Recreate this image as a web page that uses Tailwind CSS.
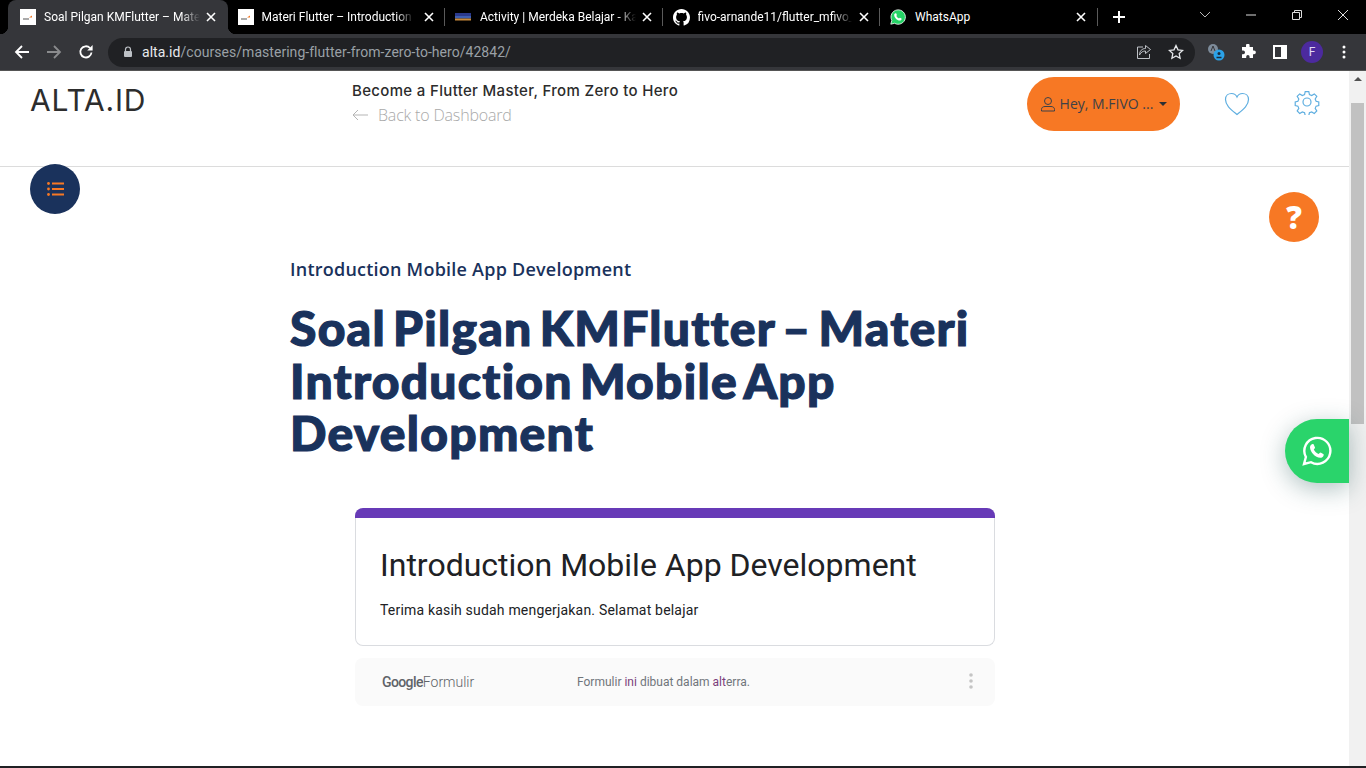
<!DOCTYPE html>
<html lang="en">
<head>
  <meta charset="UTF-8">
  <title>Soal Pilgan KMFlutter</title>
  <script src="https://cdn.jsdelivr.net/npm/@tailwindcss/browser@4"></script>
</head>
<body class="h-[768px] w-[1366px] overflow-hidden bg-white font-['Roboto',sans-serif]">
  <div class="flex h-[768px] flex-col">
    <!-- Tab strip -->
    <div class="flex h-[34px] shrink-0 items-end bg-black pl-[8px] text-white">
      <div class="relative flex h-[34px] w-[219.5px] items-center rounded-t-lg bg-[#35363a] pl-[12px] pr-[11px]">
        <span class="absolute -left-2 bottom-0 h-2 w-2 bg-[radial-gradient(circle_at_0_0,transparent_8px,#35363a_8.5px)]"></span>
        <span class="absolute -right-2 bottom-0 h-2 w-2 bg-[radial-gradient(circle_at_100%_0,transparent_8px,#35363a_8.5px)]"></span>
        <svg class="h-4 w-4 shrink-0" viewBox="0 0 16 16"><rect width="16" height="16" fill="#fff"/><path d="M3 9.500h6v1H3z" fill="#555"/><path d="M9 8.500l3-2v2z" fill="#f47721"/></svg>
        <span class="ml-2 w-[156px] overflow-hidden text-xs leading-4 whitespace-nowrap [mask-image:linear-gradient(to_right,black_88%,transparent)]">Soal Pilgan KMFlutter – Materi</span>
        <svg class="ml-auto h-3 w-3" viewBox="0 0 12 12"><path d="M2 2l8 8M10 2l-8 8" stroke="#fff" stroke-width="1.600"/></svg>
      </div>
      <div class="flex h-[34px] w-[217.5px] items-center pl-[10px]">
        <svg class="h-4 w-4 shrink-0" viewBox="0 0 16 16"><rect width="16" height="16" fill="#fff"/><path d="M3 9.500h6v1H3z" fill="#555"/><path d="M9 8.500l3-2v2z" fill="#f47721"/></svg>
        <span class="ml-2 w-[152px] overflow-hidden text-xs leading-4 whitespace-nowrap [mask-image:linear-gradient(to_right,black_88%,transparent)]">Materi Flutter – Introduction Mobile</span>
        <svg class="ml-auto h-3 w-3" viewBox="0 0 12 12"><path d="M2 2l8 8M10 2l-8 8" stroke="#fff" stroke-width="1.600"/></svg>
        <span class="ml-[9px] h-[18px] w-px bg-[#5a5a5a]"></span>
      </div>
      <div class="flex h-[34px] w-[217.5px] items-center pl-[10px]">
        <svg class="h-4 w-4 shrink-0" viewBox="0 0 16 16"><rect y="4" width="16" height="3" fill="#2b3a8c"/><rect y="7" width="16" height="2.500" fill="#3f5fb0"/><rect y="9.500" width="16" height="2" fill="#c98a3a"/></svg>
        <span class="ml-[9px] w-[156px] overflow-hidden text-xs leading-4 whitespace-nowrap [mask-image:linear-gradient(to_right,black_88%,transparent)]">Activity | Merdeka Belajar - Kampus</span>
        <svg class="ml-auto h-3 w-3" viewBox="0 0 12 12"><path d="M2 2l8 8M10 2l-8 8" stroke="#fff" stroke-width="1.600"/></svg>
        <span class="ml-[9px] h-[18px] w-px bg-[#5a5a5a]"></span>
      </div>
      <div class="flex h-[34px] w-[217.5px] items-center pl-[10px]">
        <svg class="h-[17px] w-[17px] shrink-0" viewBox="0 0 16 16"><path fill="#fff" d="M8 0C3.580 0 0 3.580 0 8c0 3.540 2.290 6.530 5.470 7.590.4.070.55-.17.55-.38 0-.19-.01-.82-.01-1.490-2.010.37-2.530-.49-2.690-.94-.09-.23-.48-.94-.82-1.130-.28-.15-.68-.52-.01-.53.63-.01 1.080.58 1.230.82.72 1.210 1.870.87 2.330.66.07-.52.28-.87.51-1.070-1.780-.2-3.640-.89-3.640-3.950 0-.87.31-1.590.82-2.150-.08-.2-.36-1.020.08-2.120 0 0 .67-.21 2.200.82.64-.18 1.320-.27 2-.27s1.360.09 2 .27c1.530-1.040 2.200-.82 2.200-.82.44 1.100.16 1.920.08 2.120.51.56.82 1.270.82 2.150 0 3.070-1.870 3.750-3.650 3.950.29.25.54.73.54 1.480 0 1.070-.01 1.930-.01 2.200 0 .21.15.46.55.38A8.010 8.010 0 0 0 16 8c0-4.420-3.580-8-8-8z"/></svg>
        <span class="ml-2 w-[154px] overflow-hidden text-xs leading-4 whitespace-nowrap [mask-image:linear-gradient(to_right,black_88%,transparent)]">fivo-arnande11/flutter_mfivo_arnande</span>
        <svg class="ml-auto h-3 w-3" viewBox="0 0 12 12"><path d="M2 2l8 8M10 2l-8 8" stroke="#fff" stroke-width="1.600"/></svg>
        <span class="ml-[9px] h-[18px] w-px bg-[#5a5a5a]"></span>
      </div>
      <div class="flex h-[34px] w-[217.5px] items-center pl-[10px]">
        <svg class="h-4 w-4 shrink-0" viewBox="0 0 16 16"><path fill="#25d366" stroke="#fff" stroke-width=".8" d="M.8 15.200l1-3.800A7.200 7.200 0 1 1 4.600 14.300z"/><path fill="#fff" d="M5.600 4.200c.3 0 .6 0 .7.4l.6 1.300c0 .3-.4.7-.6 1 .6 1.100 1.500 2 2.700 2.600.3-.2.7-.8 1-.8l1.400.7c.3.2.3.4.2.8-.2.8-1 1.300-1.800 1.300-2.800-.3-5.600-3-5.600-5.600 0-.8.6-1.600 1.400-1.700z"/></svg>
        <span class="ml-[9px] text-xs leading-4 whitespace-nowrap">WhatsApp</span>
        <svg class="ml-auto h-3 w-3" viewBox="0 0 12 12"><path d="M2 2l8 8M10 2l-8 8" stroke="#fff" stroke-width="1.600"/></svg>
        <span class="ml-[10px] h-[18px] w-px bg-[#5a5a5a]"></span>
      </div>
      <div class="flex h-[34px] flex-1 items-center pl-[14px]">
        <svg class="h-3.5 w-3.5" viewBox="0 0 14 14"><path d="M7 1v12M1 7h12" stroke="#fff" stroke-width="2"/></svg>
        <svg class="ml-[73px] h-3 w-3 -translate-y-0.5" viewBox="0 0 12 12"><path d="M1 3l5 5 5-5" fill="none" stroke="#b8b8b8"/></svg>
        <svg class="ml-[34px] h-3 w-3 -translate-y-0.5" viewBox="0 0 12 12"><path d="M1 6h10" stroke="#ddd"/></svg>
        <svg class="ml-[34px] h-3 w-3 -translate-y-0.5" viewBox="0 0 12 12"><path d="M1.500 3.500h7v7h-7zM3.500 3.500v-2h7v7h-2" fill="none" stroke="#ddd"/></svg>
        <svg class="ml-[34px] h-3 w-3 -translate-y-0.5" viewBox="0 0 12 12"><path d="M1 1l10 10M11 1L1 11" stroke="#ddd"/></svg>
      </div>
    </div>

    <!-- Toolbar -->
    <div class="flex h-[37px] shrink-0 items-center border-b border-[#555] bg-[#35363a] pl-[14px]">
      <svg class="h-4 w-4" viewBox="0 0 16 16"><path d="M15 8H2M8 2L2 8l6 6" fill="none" stroke="#fff" stroke-width="1.800"/></svg>
      <svg class="ml-4 h-4 w-4" viewBox="0 0 16 16"><path d="M1 8h13M8 2l6 6-6 6" fill="none" stroke="#8a8b8d" stroke-width="1.800"/></svg>
      <svg class="ml-4 h-4 w-4" viewBox="0 0 16 16"><path d="M13.500 8.500A5.600 5.600 0 1 1 12 4" fill="none" stroke="#fff" stroke-width="1.800"/><path d="M14.600 1v5.400H9.200z" fill="#fff"/></svg>
      <div class="ml-[14px] flex h-[29px] w-[1087px] items-center rounded-full bg-[#202124] pl-[14px] pr-[11px]">
        <svg class="h-3 w-3" viewBox="0 0 12 12"><path d="M3.500 5V3.500a2.500 2.500 0 0 1 5 0V5" fill="none" stroke="#bdc1c6" stroke-width="1.200"/><rect x="2" y="5" width="8" height="6" rx="1" fill="#bdc1c6"/></svg>
        <span class="ml-[8px] text-sm leading-4 tracking-[0.04px] text-[#e8eaed]">alta.id<span class="text-[#9aa0a6]">/courses/mastering-flutter-from-zero-to-hero/42842/</span></span>
        <svg class="ml-auto h-4 w-4" viewBox="0 0 16 16"><path d="M7 3H1.500v11.500h12V10" fill="none" stroke="#bdc1c6"/><path d="M9.500 1.500l5 4-5 4V7C7 7 5 8 3.500 11c0-4 2.500-6.500 6-6.500z" fill="none" stroke="#bdc1c6"/></svg>
        <svg class="ml-4 h-4 w-4" viewBox="0 0 16 16"><path d="M8 1.500l2 4.300 4.700.6-3.500 3.200.9 4.700L8 11.900l-4.100 2.400.9-4.700L1.300 6.400 6 5.800z" fill="none" stroke="#e8eaed" stroke-width="1.300"/></svg>
      </div>
      <div class="ml-[12px] flex items-center">
        <svg class="h-[18px] w-[18px]" viewBox="0 0 18 18"><circle cx="6" cy="6" r="5" fill="#7d8b9a"/><path d="M4 8l2-5 2 5" fill="none" stroke="#35363a"/><circle cx="12" cy="12" r="5.500" fill="#2ba2e8"/><circle cx="12" cy="10.500" r="1.500" fill="#1a2a3a"/><path d="M9.500 14.500h5" stroke="#1a2a3a" stroke-width="1.500"/></svg>
        <svg class="ml-[15px] h-4 w-4" viewBox="0 0 16 16"><path fill="#fff" d="M6 1.500a1.800 1.800 0 0 1 3.600 0V3h3.400v3.400h1a1.900 1.900 0 0 1 0 3.800h-1V14H9.600v-1.200a1.700 1.700 0 0 0-3.400 0V14H2v-3.800h1.200a1.800 1.800 0 0 0 0-3.600H2V3h4z"/></svg>
        <svg class="ml-[17px] h-[14px] w-[14px]" viewBox="0 0 14 14"><path fill-rule="evenodd" fill="#fff" d="M0 0h14v14H0zM2 2v10h6V2z"/></svg>
        <div class="ml-[14px] flex h-[22px] w-[22px] items-center justify-center rounded-full bg-[#4c2a9e] text-xs text-[#e0d8f5]">F</div>
        <svg class="ml-[19px] h-4 w-1" viewBox="0 0 4 16"><circle cx="2" cy="3" r="1.500" fill="#fff"/><circle cx="2" cy="8" r="1.500" fill="#fff"/><circle cx="2" cy="13" r="1.500" fill="#fff"/></svg>
      </div>
    </div>

    <!-- Page -->
    <div class="relative flex min-h-0 flex-1 border-b-2 border-[#202124]">
      <div class="relative min-w-0 flex-1">
        <!-- Course header -->
        <header class="flex h-[96px] border-b border-[#dcdcdc]">
          <div class="w-[352px] pl-[30px] pt-[13px] font-['Inter',sans-serif] text-[30px] leading-8 tracking-[0.8px] text-[#2d2d2d]">ALTA.ID</div>
          <div class="w-[675px] pt-[10px]">
            <p class="font-['Inter',sans-serif] text-[15px] leading-5 font-medium tracking-[0.33px] text-[#2c2c2c]">Become a Flutter Master, From Zero to Hero</p>
            <p class="mt-[2px] flex items-center font-['Open_Sans',sans-serif] text-base leading-6 font-light tracking-[-0.18px] text-[#a9a9a9]">
              <svg class="mr-[10px] h-4 w-4" viewBox="0 0 16 16"><path d="M16 8H1M6 3L1 8l5 5" fill="none" stroke="#b5b5b5"/></svg>
              Back to Dashboard
            </p>
          </div>
          <div class="mt-[6px] flex h-[54px] w-[153px] items-center justify-center rounded-[27px] bg-[#f77824] font-['Open_Sans',sans-serif] text-sm text-[#3d4147]">
            <svg class="mr-1 h-4 w-4" viewBox="0 0 16 16"><circle cx="8" cy="5" r="3.500" fill="none" stroke="#3d4147"/><path d="M1.500 15v-1.500c0-2 1.500-3 3.500-3h6c2 0 3.500 1 3.500 3V15z" fill="none" stroke="#3d4147"/></svg>
            Hey, M.FIVO ...
            <span class="ml-[6px] h-0 w-0 border-x-4 border-t-4 border-x-transparent border-t-[#2c2f33]"></span>
          </div>
          <svg class="ml-[44px] mt-[20px] h-[26px] w-[26px]" viewBox="0 0 26 26"><path d="M13 23.500C7 18.500 1.500 14.500 1.500 8.500 1.500 4.500 4.500 2.500 7.500 2.500c2.500 0 4.500 1.300 5.500 3.500 1-2.200 3-3.500 5.500-3.500 3 0 6 2 6 6 0 6-5.500 10-11.500 15z" fill="none" stroke="#5eaee0" stroke-width="1.200"/></svg>
          <svg class="ml-[44px] mt-[18px] h-[26px] w-[26px]" viewBox="0 0 26 26"><circle cx="13" cy="13" r="4" fill="none" stroke="#5eaee0" stroke-width="1.200"/><path d="M11 1.500h4l.7 3.300 2.500 1 2.900-1.800 2.800 2.800-1.800 2.900 1 2.500 3 .7v4l-3 .7-1 2.500 1.800 2.900-2.800 2.800-2.900-1.800-2.500 1-.7 3h-4l-.7-3-2.500-1-2.900 1.800-2.800-2.800 1.800-2.900-1-2.500-3-.7v-4l3-.7 1-2.500-1.800-2.900 2.800-2.800 2.900 1.800 2.500-1z" transform="translate(1.300 1.300) scale(.9)" fill="none" stroke="#5eaee0" stroke-width="1.300"/></svg>
        </header>

        <!-- Article -->
        <main class="pl-[290px] pt-[90px]">
          <p class="font-['Open_Sans',sans-serif] text-lg leading-6 font-semibold tracking-[0.23px] text-[#1a325c]">Introduction Mobile App Development</p>
          <h1 class="mt-[21px] w-[700px] font-['Lato',sans-serif] text-[48px] leading-[52.500px] font-black tracking-[1.25px] [word-spacing:-5.5px] text-[#1a325c] [-webkit-text-stroke:1.200px_#1a325c] [font-variant-ligatures:none]">Soal Pilgan KMFlutter – Materi Introduction Mobile App Development</h1>

          <section class="ml-[65px] mt-[48px] w-[640px]">
            <div class="h-[138px] rounded-lg border border-[#dadce0] border-t-0 bg-white">
              <div class="-mx-px h-[10px] rounded-t-lg bg-[#673ab7]"></div>
              <h2 class="mt-[27px] px-[24px] text-[32px] leading-10 text-[#202124]">Introduction Mobile App Development</h2>
              <p class="mt-[15px] px-[24px] text-sm leading-5 tracking-[0.19px] text-[#202124]">Terima kasih sudah mengerjakan. Selamat belajar</p>
            </div>
            <div class="mt-3 flex h-12 items-center rounded-lg bg-[#fafafa] pl-[27px] pr-[22px]">
              <span class="w-[195px] text-sm leading-5 text-[#5f6368]"><span class="font-medium tracking-[-0.6px]">Google</span><span class="font-light">Formulir</span></span>
              <span class="text-xs leading-4 text-[#70757a]">Formulir <span class="text-[#7a3e7a]">ini</span> dibuat dalam <span class="text-[#7a3e7a]">alt</span>erra.</span>
              <svg class="ml-auto h-4 w-1 -translate-y-px" viewBox="0 0 4 16"><circle cx="2" cy="2" r="1.800" fill="#c4c4c4"/><circle cx="2" cy="8" r="1.800" fill="#c4c4c4"/><circle cx="2" cy="14" r="1.800" fill="#c4c4c4"/></svg>
            </div>
          </section>
        </main>

        <!-- Floating buttons -->
        <div class="absolute left-[30px] top-[93px] flex h-[50px] w-[50px] items-center justify-center rounded-full bg-[#1a325c]">
          <svg class="h-4 w-[17px]" viewBox="0 0 17 16"><path d="M5 2.500h12M5 8h12M5 13.500h12" stroke="#f77824" stroke-width="2"/><circle cx="1.500" cy="2.500" r="1.400" fill="#f77824"/><circle cx="1.500" cy="8" r="1.400" fill="#f77824"/><circle cx="1.500" cy="13.500" r="1.400" fill="#f77824"/></svg>
        </div>
        <div class="absolute left-[1269px] top-[121px] flex h-[50px] w-[50px] items-center justify-center rounded-full bg-[#f77824] font-['Open_Sans',sans-serif] text-[31px] font-extrabold text-white">?</div>
        <div class="absolute right-0 top-[348px] flex h-[64px] w-[64px] items-center justify-center rounded-l-[32px] bg-[#2ad46b] shadow-[0_6px_24px_rgba(30,80,80,0.35)]">
          <svg class="h-[30px] w-[30px]" viewBox="0 0 30 30"><path fill="none" stroke="#fff" stroke-width="2.400" d="M2 28l1.900-7A13 13 0 1 1 9 26.200z"/><path fill="#fff" d="M10.500 8c.6 0 1 0 1.300.7l1.200 2.700c.1.600-.7 1.300-1.200 2 1.100 2.100 2.700 3.600 4.900 4.700.6-.5 1.300-1.500 1.900-1.500l2.600 1.300c.6.300.6.800.4 1.500-.4 1.500-1.900 2.400-3.300 2.400-5.200-.6-10-5.500-10.300-10.400 0-1.500 1-2.800 2.500-3.400z"/></svg>
        </div>
      </div>

      <!-- Scrollbar -->
      <div class="flex w-[17px] shrink-0 flex-col items-center bg-[#f1f1f1]">
        <span class="mt-[6px] h-0 w-0 border-x-4 border-b-4 border-x-transparent border-b-[#505050]"></span>
        <div class="mt-[22px] h-[321px] w-[13px] bg-[#c1c1c1]"></div>
      </div>
    </div>
  </div>
</body>
</html>
